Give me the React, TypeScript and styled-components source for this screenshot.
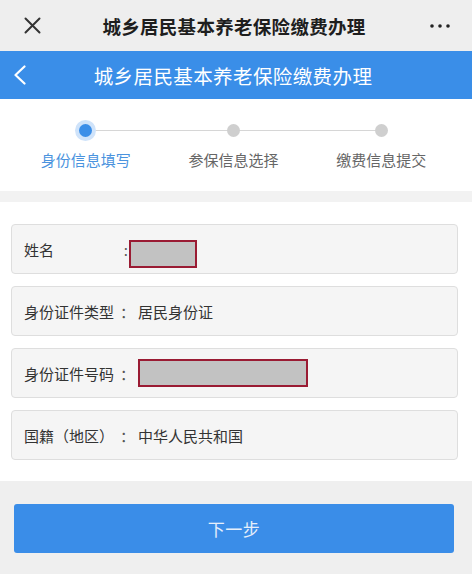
import React from "react";
import styled, { createGlobalStyle } from "styled-components";

const Global = createGlobalStyle`
  html, body { margin: 0; padding: 0; background: #ffffff; }
  body { font-family: "Noto Sans CJK SC", "Noto Sans", sans-serif; }
  * { box-sizing: border-box; }
`;

const Page = styled.div`
  width: 472px;
  height: 574px;
  display: flex;
  flex-direction: column;
  background: #ffffff;
  overflow: hidden;
`;

const TopBar = styled.div`
  height: 51px;
  flex: none;
  background: #eeeeee;
  display: flex;
  align-items: center;
  padding: 0 22px 0 22px;
`;

const TopTitle = styled.div`
  flex: 1;
  text-align: center;
  font-size: 18.5px;
  font-weight: 700;
  color: #1e1e1e;
  letter-spacing: 0.3px;
  padding-right: 4px;
`;

const IconBox = styled.div`
  width: 20px;
  height: 20px;
  display: flex;
  align-items: center;
  justify-content: center;
`;

const NavBar = styled.div`
  height: 48px;
  flex: none;
  background: #3a8ee8;
  display: flex;
  align-items: center;
  padding: 0 10px;
`;

const NavTitle = styled.div`
  flex: 1;
  text-align: center;
  font-size: 19.5px;
  color: #ffffff;
  letter-spacing: 0.4px;
  padding-right: 26px;
`;

const Steps = styled.div`
  height: 92px;
  flex: none;
  display: grid;
  grid-template-columns: repeat(3, 1fr);
  padding: 0 17px 0 12px;
  position: relative;
`;

const StepLine = styled.div`
  position: absolute;
  left: 88px;
  right: 92px;
  top: 31px;
  height: 1px;
  background: #d6d6d6;
`;

const Step = styled.div`
  display: flex;
  flex-direction: column;
  align-items: center;
  position: relative;
`;

const DotWrap = styled.div`
  height: 64px;
  display: flex;
  align-items: flex-start;
  padding-top: 25px;
`;

const Dot = styled.div<{ $active?: boolean }>`
  width: 13px;
  height: 13px;
  border-radius: 50%;
  background: ${(p) => (p.$active ? "#3a8ee8" : "#cfcfcf")};
  box-shadow: ${(p) => (p.$active ? "0 0 0 4px #cfe3fa" : "none")};
`;

const StepLabel = styled.div<{ $active?: boolean }>`
  margin-top: -14px;
  font-size: 15px;
  color: ${(p) => (p.$active ? "#4a93de" : "#666666")};
  white-space: nowrap;
`;

const Band = styled.div`
  height: 11px;
  flex: none;
  background: #f2f2f2;
`;

const Form = styled.div`
  flex: none;
  display: flex;
  flex-direction: column;
  gap: 12px;
  padding: 22px 14px 21px 11px;
`;

const Card = styled.div`
  height: 50px;
  display: flex;
  align-items: center;
  padding: 0 12px;
  background: #f5f5f5;
  border: 1px solid #dedede;
  border-radius: 4px;
  font-size: 15px;
  color: #333333;
`;

const Label = styled.span`
  width: 92px;
  flex: none;
  white-space: nowrap;
`;

const Colon = styled.span<{ $narrow?: boolean }>`
  flex: none;
  width: ${(p) => (p.$narrow ? 13 : 17)}px;
  margin-left: ${(p) => (p.$narrow ? 0 : 4)}px;
  text-align: ${(p) => (p.$narrow ? "right" : "left")};
  padding-right: ${(p) => (p.$narrow ? 1 : 0)}px;
  color: #555;
`;

const Value = styled.span`
  margin-left: 1px;
  white-space: nowrap;
`;

const Masked = styled.span<{ $w: number; $shift?: number; $gap?: number }>`
  display: inline-block;
  flex: none;
  width: ${(p) => p.$w}px;
  height: 28px;
  background: #c2c2c2;
  border: 2px solid #9a1b33;
  margin-top: ${(p) => p.$shift ?? 0}px;
  margin-left: ${(p) => p.$gap ?? 0}px;
`;

const Footer = styled.div`
  flex: 1;
  background: #efefef;
  padding: 23px 18px 0 14px;
`;

const Button = styled.button`
  width: 100%;
  height: 49px;
  border: none;
  border-radius: 3px;
  background: #3a8de8;
  color: #e6effb;
  font-family: "Noto Sans CJK SC", "Noto Sans", sans-serif;
  font-size: 17px;
  letter-spacing: 0.5px;
`;

const Close = () => (
  <svg width="17" height="17" viewBox="0 0 17 17">
    <path d="M1.5 1.5 L15.5 15.5 M15.5 1.5 L1.5 15.5" stroke="#333" strokeWidth="2" strokeLinecap="round" />
  </svg>
);

const More = () => (
  <svg width="20" height="4" viewBox="0 0 20 4">
    <circle cx="2" cy="2" r="1.8" fill="#222" />
    <circle cx="10" cy="2" r="1.8" fill="#222" />
    <circle cx="18" cy="2" r="1.8" fill="#222" />
  </svg>
);

const Back = () => (
  <svg width="14" height="20" viewBox="0 0 14 20">
    <path d="M11.5 1.5 L2.5 10 L11.5 18.5" stroke="#fff" strokeWidth="2.2" fill="none" strokeLinecap="round" strokeLinejoin="round" />
  </svg>
);

const steps = [
  { label: "身份信息填写", active: true },
  { label: "参保信息选择", active: false },
  { label: "缴费信息提交", active: false },
];

export default function App() {
  return (
    <Page>
      <Global />
      <TopBar>
        <IconBox>
          <Close />
        </IconBox>
        <TopTitle>城乡居民基本养老保险缴费办理</TopTitle>
        <IconBox>
          <More />
        </IconBox>
      </TopBar>
      <NavBar>
        <IconBox>
          <Back />
        </IconBox>
        <NavTitle>城乡居民基本养老保险缴费办理</NavTitle>
      </NavBar>
      <Steps>
        <StepLine />
        {steps.map((s) => (
          <Step key={s.label}>
            <DotWrap>
              <Dot $active={s.active} />
            </DotWrap>
            <StepLabel $active={s.active}>{s.label}</StepLabel>
          </Step>
        ))}
      </Steps>
      <Band />
      <Form>
        <Card>
          <Label>姓名</Label>
          <Colon $narrow>:</Colon>
          <Masked $w={68} $shift={9} />
        </Card>
        <Card>
          <Label>身份证件类型</Label>
          <Colon>：</Colon>
          <Value>居民身份证</Value>
        </Card>
        <Card>
          <Label>身份证件号码</Label>
          <Colon>：</Colon>
          <Masked $w={170} $gap={1} />
        </Card>
        <Card>
          <Label>国籍（地区）</Label>
          <Colon>：</Colon>
          <Value>中华人民共和国</Value>
        </Card>
      </Form>
      <Footer>
        <Button>下一步</Button>
      </Footer>
    </Page>
  );
}
